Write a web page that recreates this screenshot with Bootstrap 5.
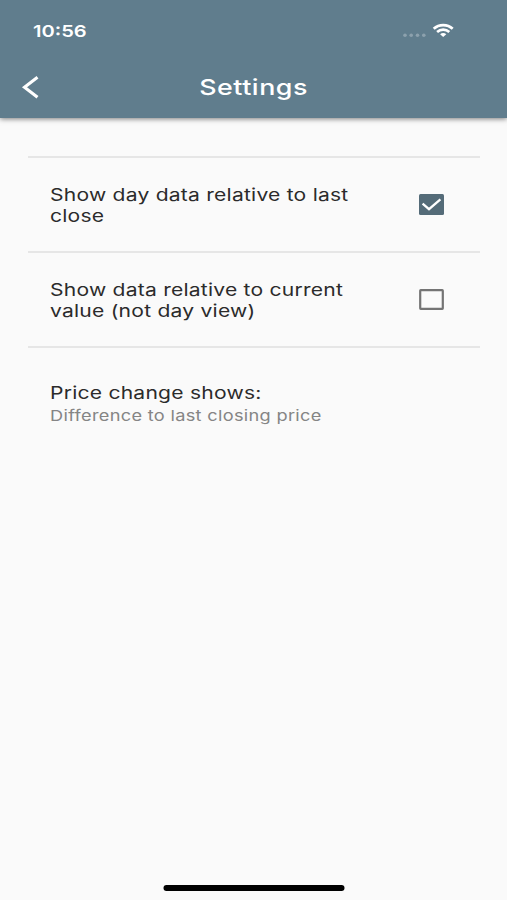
<!DOCTYPE html>
<html lang="en">
<head>
<meta charset="utf-8">
<meta name="viewport" content="width=device-width, initial-scale=1">
<title>Settings</title>
<link href="https://cdn.jsdelivr.net/npm/bootstrap@5.3.0/dist/css/bootstrap.min.css" rel="stylesheet">
<style>
  body { font-family: Inter, "Liberation Sans", sans-serif; background: #fafafa; color: #2b2b2b; height: 900px; overflow: hidden; }
  .app-header { background: #607d8d; height: 118px; box-shadow: 0 1px 5px rgba(0,0,0,.5); }
  .status-bar { height: 56px; padding: 6px 53px 0 32.5px; }
  .title-bar { height: 62px; display: grid; grid-template-columns: 60px 1fr 60px; }
  .wide { display: inline-block; white-space: nowrap; transform: scaleX(1.22); transform-origin: 0 50%; }
  .clock { font-size: 16.5px; font-weight: 600; line-height: 20px; }
  .page-title { font-size: 22px; font-weight: 500; line-height: 28px; letter-spacing: .42px; transform-origin: 50% 50%; }
  .settings { padding: 38px 27px 0 28px; }
  .setting { height: 95px; border-top: 2px solid #e6e6e6; padding: 0 36px 0 21.5px; }
  .setting + .setting + .setting { height: 114px; }
  .label-text { font-size: 17.3px; line-height: 21px; letter-spacing: .18px; }
  .sub-text { font-size: 14.9px; line-height: 20px; color: #858585; letter-spacing: .26px; padding-top: 3px; }
  .home-bar { width: 181px; height: 6px; border-radius: 3px; background: #000; margin-bottom: 9px; transform: translateX(.5px); }
</style>
</head>
<body class="d-flex flex-column">
<header class="app-header text-white flex-shrink-0">
  <div class="status-bar d-flex align-items-center justify-content-between">
    <span class="wide clock">10:56</span>
    <svg width="52" height="16" viewBox="0 0 52 16" aria-hidden="true">
      <g fill="#8ca1ad"><circle cx="3" cy="12.200" r="1.8"/><circle cx="9.2" cy="12.200" r="1.8"/><circle cx="15.5" cy="12.200" r="1.8"/><circle cx="21.8" cy="12.200" r="1.8"/></g>
      <g fill="none" stroke="#fff" stroke-width="2.7"><path d="M31.7 5.8C37 .8 45.400 .8 50.700 5.800"/><path d="M35.100 8.900C38.600 5.800 43.800 5.800 47.300 8.900"/></g>
      <path fill="#fff" d="M38.100 11.200C39.800 9.500 42.600 9.500 44.300 11.200L41.200 14Z"/>
    </svg>
  </div>
  <div class="title-bar align-items-center">
    <svg width="60" height="30" viewBox="0 0 60 30" aria-label="Back"><path d="M37.500 5.200L24.500 15.200L37.500 25.200" fill="none" stroke="#fff" stroke-width="3.100"/></svg>
    <div class="text-center"><span class="wide page-title">Settings</span></div>
  </div>
</header>
<main class="settings flex-grow-1">
  <div class="setting d-flex align-items-center justify-content-between">
    <div class="label-text"><span class="wide">Show day data relative to last</span><br><span class="wide">close</span></div>
    <svg class="flex-shrink-0" width="25" height="21" viewBox="0 0 25 21" role="img" aria-label="Checked"><rect width="25" height="21" rx="1.500" fill="#546b78"/><path d="M3.600 9.700L10 15.200L21.400 5.400" fill="none" stroke="#fff" stroke-width="2.300"/></svg>
  </div>
  <div class="setting d-flex align-items-center justify-content-between">
    <div class="label-text"><span class="wide">Show data relative to current</span><br><span class="wide">value (not day view)</span></div>
    <svg class="flex-shrink-0" width="25" height="21" viewBox="0 0 25 21" role="img" aria-label="Unchecked"><rect x="1.200" y="1.200" width="22.600" height="18.600" rx=".5" fill="none" stroke="#747474" stroke-width="2.200"/></svg>
  </div>
  <div class="setting d-flex flex-column justify-content-center">
    <div class="label-text"><span class="wide">Price change shows:</span></div>
    <div class="sub-text"><span class="wide">Difference to last closing price</span></div>
  </div>
</main>
<div class="home-bar mx-auto flex-shrink-0"></div>
<script src="https://cdn.jsdelivr.net/npm/bootstrap@5.3.0/dist/js/bootstrap.bundle.min.js"></script>
</body>
</html>
